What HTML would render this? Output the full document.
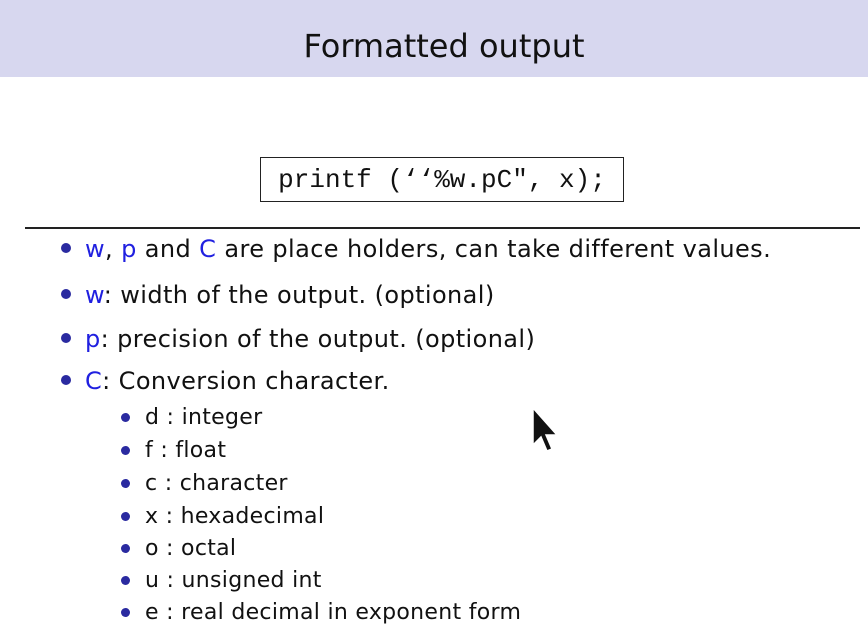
<!DOCTYPE html>
<html><head><style>
body{margin:0;width:868px;height:640px;background:#fff;position:relative;overflow:hidden;font-family:"DejaVu Sans","Liberation Sans",sans-serif;color:#111}
.hdr{position:absolute;left:0;top:0;width:868px;height:77px;background:#d7d7ef}
.title{position:absolute;left:10px;width:868px;top:26px;text-align:center;font-size:32px;line-height:40px;color:#111}
.box{position:absolute;left:260px;top:157px;width:364px;height:45px;border:1.5px solid #222;box-sizing:border-box;font-family:"Liberation Mono",monospace;font-size:26px;line-height:44px;text-align:center}
.rule{position:absolute;left:25px;top:227px;width:835px;height:1.5px;background:#222}
.li{position:absolute;left:85px;font-size:24px;letter-spacing:0.4px;white-space:nowrap}
.li:before{content:"";position:absolute;left:-24px;top:50%;width:10px;height:10px;margin-top:-6px;border-radius:50%;background:#2a2aa0}
.s{position:absolute;left:145px;font-size:22px;letter-spacing:0.3px;white-space:nowrap}
.s:before{content:"";position:absolute;left:-24px;top:50%;width:9px;height:9px;margin-top:-5px;border-radius:50%;background:#2a2aa0}
b{font-weight:normal;color:#2020e0}
</style></head><body>
<div class="hdr"></div>
<div class="title">Formatted output</div>
<div class="box">printf (‘‘%w.pC", x);</div>
<div class="rule"></div>
<div class="li" style="top:235px"><b>w</b>, <b>p</b> and <b>C</b> are place holders, can take different values.</div>
<div class="li" style="top:281px"><b>w</b>: width of the output. (optional)</div>
<div class="li" style="top:325px"><b>p</b>: precision of the output. (optional)</div>
<div class="li" style="top:367px"><b>C</b>: Conversion character.</div>
<div class="s" style="top:405px">d : integer</div>
<div class="s" style="top:438px">f : float</div>
<div class="s" style="top:471px">c : character</div>
<div class="s" style="top:504px">x : hexadecimal</div>
<div class="s" style="top:536px">o : octal</div>
<div class="s" style="top:568px">u : unsigned int</div>
<div class="s" style="top:600px">e : real decimal in exponent form</div>
<svg style="position:absolute;left:530px;top:405px" width="32" height="52" viewBox="0 0 32 52"><path d="M3 3 L3 40 L11 32 L17 46 L22 44 L16 30 L27 30 Z" fill="#111" stroke="#fff" stroke-width="1.5"/></svg>
</body></html>
